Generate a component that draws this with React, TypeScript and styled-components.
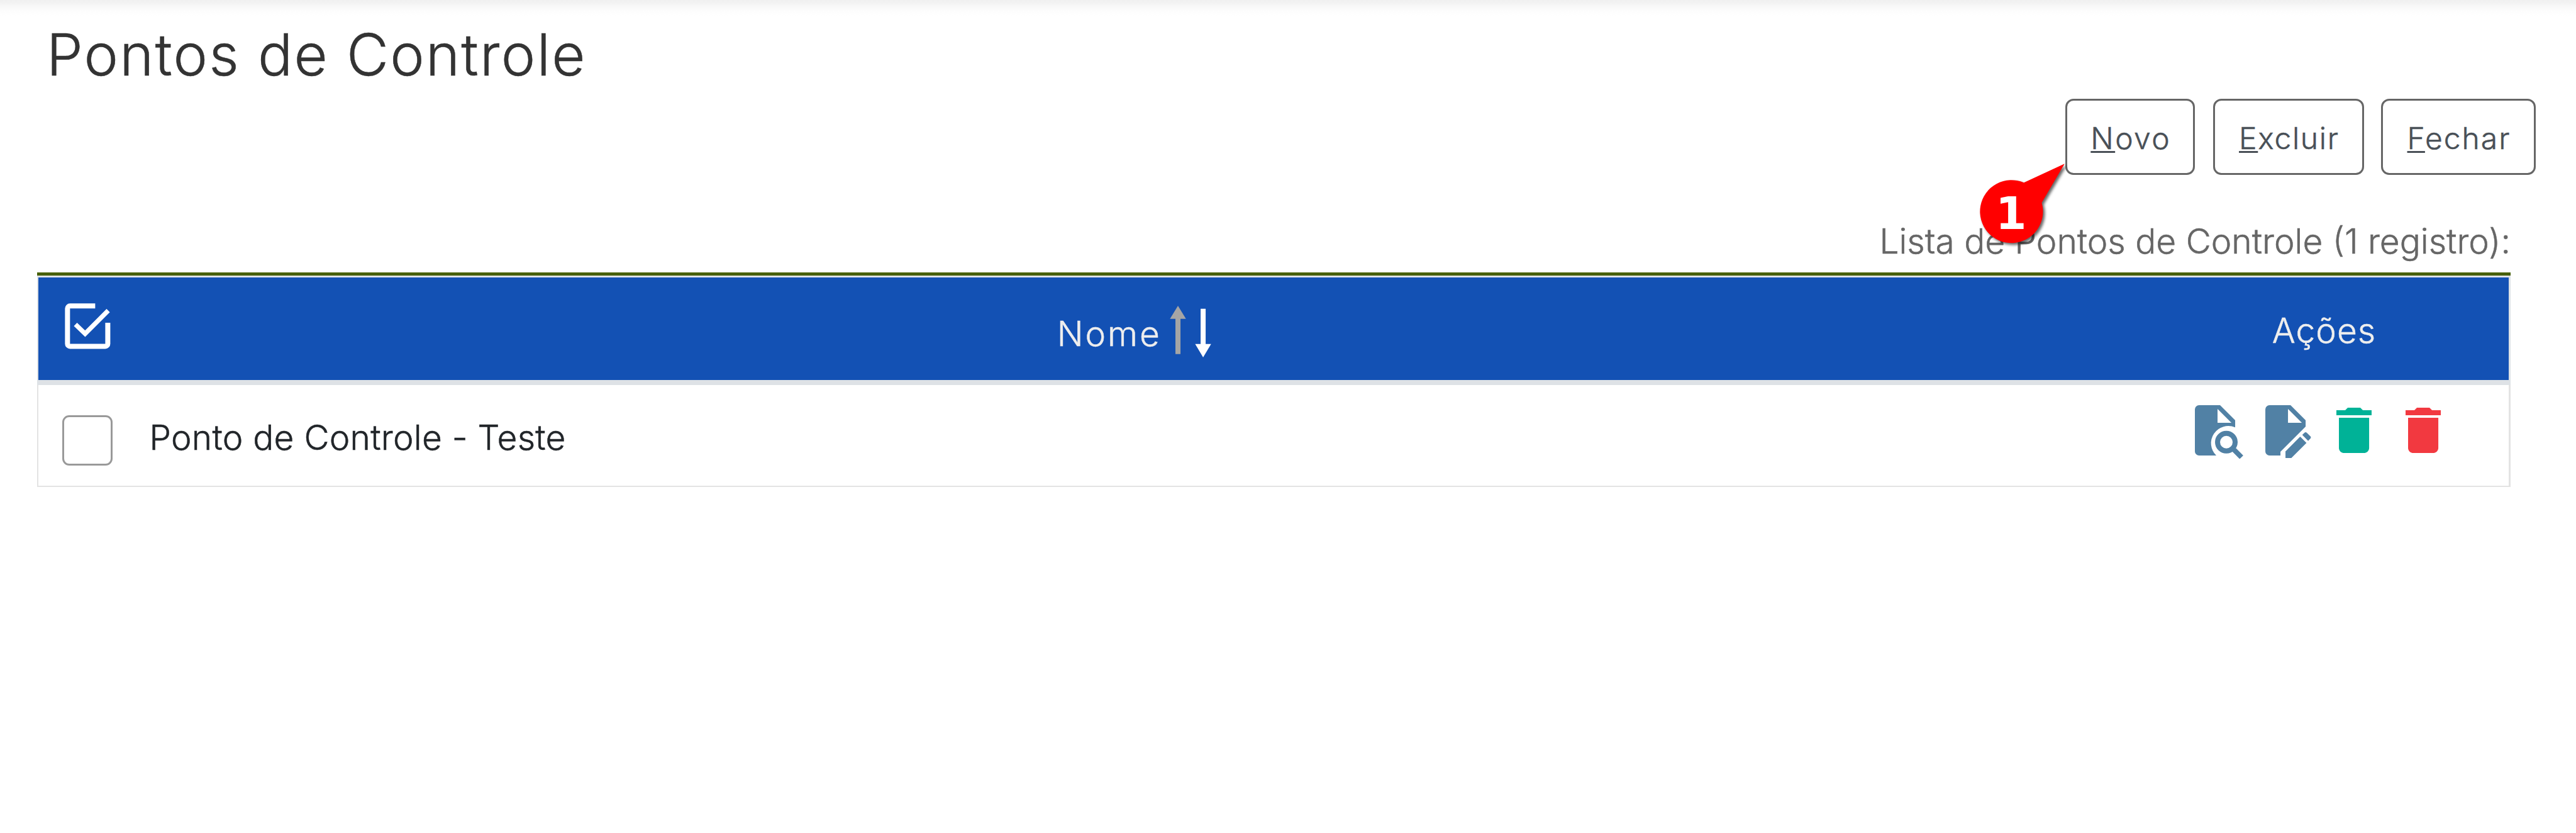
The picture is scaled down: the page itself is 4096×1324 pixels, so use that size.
import React from "react";
import styled, { createGlobalStyle } from "styled-components";

const GlobalStyle = createGlobalStyle`
  *, *::before, *::after { box-sizing: border-box; }
  body { margin: 0; background: #fff; }
`;

const Page = styled.main`
  position: relative;
  width: 4096px;
  height: 1324px;
  overflow: hidden;
  background: linear-gradient(#f0f0f0 0, #f2f2f2 4px, #f8f8f8 10px, #fdfdfd 18px, #fff 25px);
  font-family: Inter, "Liberation Sans", sans-serif;
  font-weight: 300;
  font-size: 55px;
  line-height: 60px;
  color: #212529;
  -webkit-text-stroke: 0.5px currentColor;
`;

const Title = styled.h1`
  margin: 0;
  padding: 36.5px 0 0 74px;
  height: 157px;
  font-size: 92px;
  font-weight: 300;
  line-height: 100px;
  letter-spacing: 2.2px;
  color: #333;
`;

const Toolbar = styled.div`
  display: flex;
  justify-content: flex-end;
  gap: 27px;
  height: 121px;
  padding-right: 64px;
`;

const ToolButton = styled.button<{ $width: number; $spacing: number; $mr?: number }>`
  display: flex;
  align-items: center;
  justify-content: center;
  width: ${(p) => p.$width}px;
  height: 121px;
  margin: 0 ${(p) => p.$mr ?? 0}px 0 0;
  padding: 5px 0 0 ${(p) => p.$spacing}px;
  border: 3px solid #666;
  border-radius: 13px;
  background: #fff;
  font: inherit;
  font-size: 48px;
  letter-spacing: ${(p) => p.$spacing}px;
  color: #495057;
`;

const AccessKey = styled.span`
  text-decoration: underline;
  text-decoration-thickness: 3px;
  text-underline-offset: 3px;
  text-decoration-skip-ink: none;
`;

const TableBox = styled.section`
  width: 3933px;
  margin-left: 59px;
`;

const Caption = styled.div`
  height: 155px;
  padding: 75.2px 0 0;
  text-align: right;
  color: #666;
`;

const Table = styled.div`
  border-top: 5px solid #476004;
`;

const columns = "143px 1fr 587px";

const HeaderRow = styled.div`
  display: grid;
  grid-template-columns: ${columns};
  height: 174px;
  border: solid #dee2e6;
  border-width: 3px 3px 8px 2px;
  background: #1351b4;
  background-clip: padding-box;
  color: #eee;
`;

const BodyRow = styled.div`
  display: grid;
  grid-template-columns: ${columns};
  height: 162px;
  border: solid #e3e3e3;
  border-width: 0 3px 2px 2px;
`;

const Cell = styled.div<{ $center?: boolean; $top?: number; $left?: number }>`
  display: flex;
  align-items: center;
  justify-content: ${(p) => (p.$center ? "center" : "flex-start")};
  padding: ${(p) => p.$top ?? 0}px 0 0 ${(p) => p.$left ?? 0}px;
`;

const Label = styled.span<{ $spacing: number; $drop?: number }>`
  padding-top: ${(p) => p.$drop ?? 0}px;
  letter-spacing: ${(p) => p.$spacing}px;
  white-space: nowrap;
`;

const Glyph = styled.svg<{ $w: number; $h: number; $ml?: number; $mt?: number }>`
  display: block;
  flex: none;
  width: ${(p) => p.$w}px;
  height: ${(p) => p.$h}px;
  margin-left: ${(p) => p.$ml ?? 0}px;
  margin-top: ${(p) => p.$mt ?? 0}px;
`;

const Checkbox = styled.span`
  width: 80px;
  height: 80px;
  border: 3px solid #999;
  border-radius: 11px;
  background: #fff;
`;

const Actions = styled.div`
  display: flex;
  align-items: flex-start;
  padding: 31.5px 0 0 87.5px;
`;

const Callout = styled.svg`
  position: absolute;
  left: 3137.4px;
  top: 247px;
  width: 160.2px;
  height: 160.2px;
  overflow: visible;
  filter: drop-shadow(3px 3px 2px rgba(0, 0, 0, 0.6));
`;

const CalloutNumber = styled.text`
  font: bold 106.5px "DejaVu Sans", sans-serif;
  -webkit-text-stroke: 0;
  text-anchor: middle;
  fill: #fff;
`;

const SelectAllIcon = () => (
  <Glyph $w={77.4} $h={83.4} viewBox="0 0 116 125" fill="none" stroke="#fff" strokeWidth={12}>
    <path d="M74 8H14a6 6 0 0 0-6 6v84a6 6 0 0 0 6 6h84a6 6 0 0 0 6-6V48" />
    <path d="M27 52 50 74 105 19" strokeWidth={11} />
  </Glyph>
);

const SortArrows = () => (
  <Glyph $w={72.1} $h={85.4} $ml={10.2} viewBox="0 0 108 128">
    <path fill="#a5a5a5" d="M24 3 43 34H30V118H18V34H5Z" />
    <path fill="#fff" d="M78 10H90V94H103L84 126 65 94H78Z" />
  </Glyph>
);

const ViewIcon = () => (
  <Glyph $w={77.4} $h={85.4} viewBox="0 0 116 128" fill="#5181a5">
    <path
      fillRule="evenodd"
      d="M10 0H60L96 36V53A41 41 0 0 0 51 120H10A10 10 0 0 1 0 110V10A10 10 0 0 1 10 0ZM54 9V42H87Z"
    />
    <circle cx="75" cy="88" r="21" fill="none" stroke="#5181a5" strokeWidth="12" />
    <path d="M90 103 111 124" stroke="#5181a5" strokeWidth="12" />
  </Glyph>
);

const EditIcon = () => (
  <Glyph $w={74.8} $h={85.4} $ml={34.7} viewBox="0 0 112 128" fill="#5181a5">
    <path
      fillRule="evenodd"
      d="M10 0H60L96 36V51L36 111V120H10A10 10 0 0 1 0 110V10A10 10 0 0 1 10 0ZM54 9V42H87Z"
    />
    <path d="M48 126V110L83 75 98 90 62 126Z" />
    <path d="M88 71 93 66Q96 63 99 66L107 74Q110 77 107 80L102 85Z" />
  </Glyph>
);

const TrashIcon = ({ color, gap }: { color: string; gap: number }) => (
  <Glyph $w={56.1} $h={72.1} $ml={gap} $mt={4} viewBox="5 3 14 18" fill={color}>
    <path d="M6 19c0 1.1.9 2 2 2h8c1.1 0 2-.9 2-2V7H6v12zM19 4h-3.5l-1-1h-5l-1 1H5v2h14V4z" />
  </Glyph>
);

export default function App() {
  return (
    <Page>
      <GlobalStyle />
      <Title>Pontos de Controle</Title>
      <Toolbar>
        <ToolButton $width={206} $spacing={2.4} $mr={2}>
          <span><AccessKey>N</AccessKey>ovo</span>
        </ToolButton>
        <ToolButton $width={240} $spacing={1.7}>
          <span><AccessKey>E</AccessKey>xcluir</span>
        </ToolButton>
        <ToolButton $width={246} $spacing={2}>
          <span><AccessKey>F</AccessKey>echar</span>
        </ToolButton>
      </Toolbar>
      <TableBox>
        <Caption>Lista de Pontos de Controle (1 registro):</Caption>
        <Table>
          <HeaderRow>
            <Cell $left={40.5}>
              <SelectAllIcon />
            </Cell>
            <Cell $center $top={8} $left={4}>
              <Label $spacing={3} $drop={7}>Nome</Label>
              <SortArrows />
            </Cell>
            <Cell $center $top={5}>
              <Label $spacing={1}>Ações</Label>
            </Cell>
          </HeaderRow>
          <BodyRow>
            <Cell $left={38} $top={15}>
              <Checkbox />
            </Cell>
            <Cell $left={33.5} $top={6}>
              <Label $spacing={0.25}>Ponto de Controle - Teste</Label>
            </Cell>
            <Actions>
              <ViewIcon />
              <EditIcon />
              <TrashIcon color="#00b297" gap={38.7} />
              <TrashIcon color="#f23940" gap={53.8} />
            </Actions>
          </BodyRow>
        </Table>
      </TableBox>
      <Callout viewBox="0 0 240 240">
        <path fill="#f00" d="M218.5 20 164 112.700A75 75 0 1 1 121.500 64.700Z" />
        <CalloutNumber x="91" y="176">1</CalloutNumber>
      </Callout>
    </Page>
  );
}
